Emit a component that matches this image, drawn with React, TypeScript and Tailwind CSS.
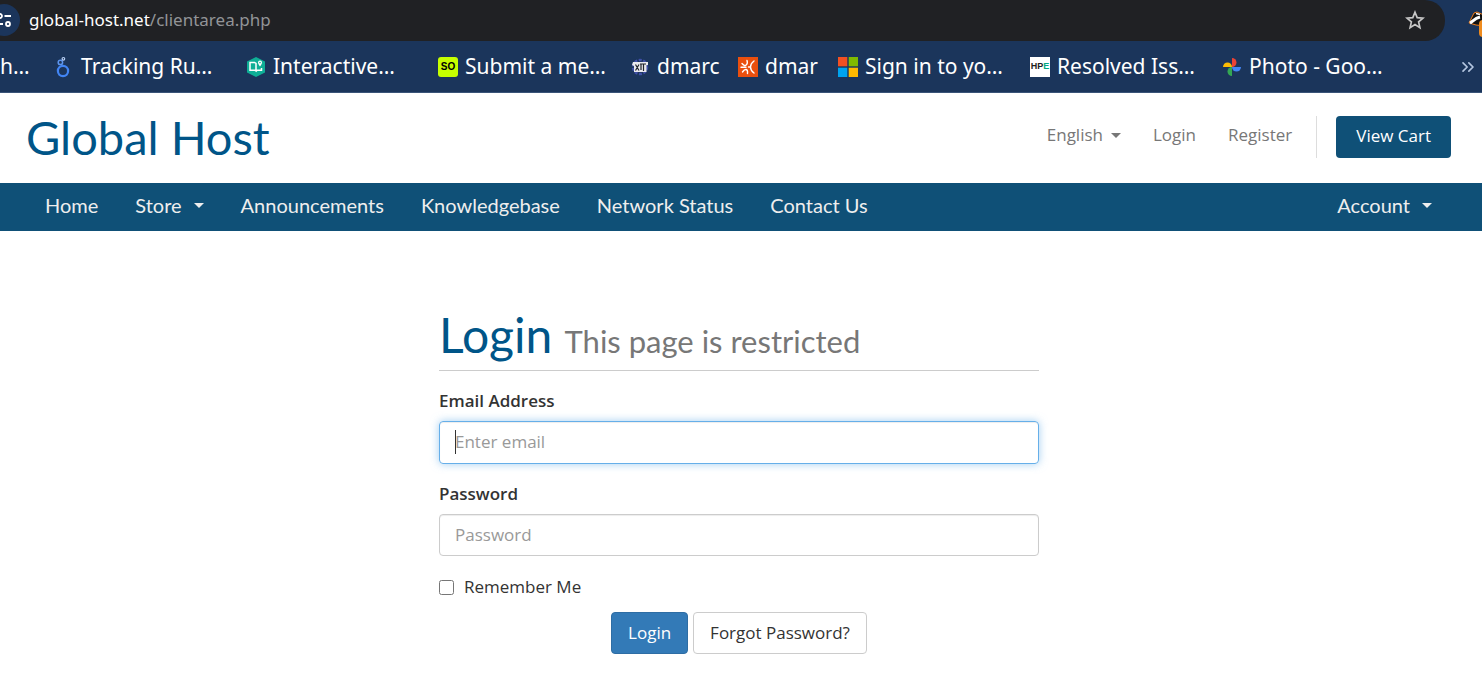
import type { ReactNode } from "react";
import { ChevronsRight } from "lucide-react";

const TunedIcon = () => (
  <svg width="16" height="16" viewBox="0 0 16 16" fill="none" stroke="#fff" strokeWidth="1.8">
    <circle cx="4" cy="4" r="2" />
    <path d="M8.5 4H15M0 12h7" />
    <circle cx="12" cy="12" r="2" />
  </svg>
);

const StarIcon = () => (
  <svg width="20" height="20" viewBox="0 0 20 20" fill="none" stroke="#c7c7c7" strokeWidth="1.7">
    <path d="M10 2.200l2.200 5.400 5.800.5-4.400 3.800 1.300 5.700-4.900-3-4.900 3 1.300-5.700L2 8.100l5.800-.5z" />
  </svg>
);

const LookerIcon = () => (
  <svg width="20" height="22" viewBox="0 0 20 22" fill="none">
    <circle cx="9" cy="15" r="5.1" stroke="#4285f4" strokeWidth="2.2" />
    <circle cx="6.4" cy="6.4" r="2.2" stroke="#5d95ee" strokeWidth="1.5" />
    <circle cx="9.4" cy="2.8" r="1.3" stroke="#b9d0f5" strokeWidth="1.2" />
  </svg>
);

const MapIcon = () => (
  <svg width="20" height="22" viewBox="0 0 20 22">
    <path d="M10 1l9 4.500v11L10 21l-9-4.500v-11z" fill="#0fae96" />
    <path d="M4 6.500h4.500L10 7.500V15l-1.500-.8H4zM10 15l1.500-.8h4V12" fill="none" stroke="#fff" strokeWidth="1.500" />
    <path d="M14 4.500a2 2 0 0 1 2 2c0 1.500-2 4-2 4s-2-2.500-2-4a2 2 0 0 1 2-2z" fill="#fff" />
    <circle cx="14" cy="6.600" r=".8" fill="#0fae96" />
  </svg>
);

const SoIcon = () => (
  <span className="flex size-5 items-center justify-center rounded-[3px] bg-[#c6ff00] font-['Liberation_Sans',sans-serif] text-[10px] leading-none font-bold text-black">
    SO
  </span>
);

const ToolboxIcon = () => (
  <svg width="20" height="20" viewBox="0 0 20 20">
    <circle cx="10" cy="10" r="7" fill="none" stroke="#3f4fa6" strokeWidth="2.500" strokeDasharray="3 1.500" />
    <path d="M3 5h15v3h-1.500v7H4V9L2 8z" fill="#e9e9ee" />
    <path d="M5.500 7.500l3.500 6M9 7.500l-3.500 6M10 7h6M13.500 7v7M11 7v6" stroke="#20242c" strokeWidth="1.200" />
  </svg>
);

const NodesIcon = () => (
  <svg width="20" height="20" viewBox="0 0 20 20">
    <path d="M0 0h20v20H0z" fill="#ea4f0e" />
    <path
      d="M9 3.500q1 3-.8 4.500T4 6.500M3 10.300h5M4.500 15q2-3 3.700-2.500T9.500 16.500M16 4q-3.500 2.500-3.500 6t3.500 6M12.500 10h-2"
      fill="none"
      stroke="#fff"
      strokeWidth="1.400"
      strokeLinecap="round"
    />
  </svg>
);

const MicrosoftIcon = () => (
  <svg width="20" height="20" viewBox="0 0 20 20">
    <path d="M0 0h9.300v9.300H0z" fill="#f25022" />
    <path d="M10.700 0H20v9.300h-9.300z" fill="#7fba00" />
    <path d="M0 10.700h9.300V20H0z" fill="#00a4ef" />
    <path d="M10.700 10.700H20V20h-9.300z" fill="#ffb900" />
  </svg>
);

const HpeIcon = () => (
  <span className="flex size-5 items-center justify-center overflow-hidden bg-white font-['Liberation_Sans',sans-serif] text-[9px] leading-none font-bold text-[#222]">
    HP<span className="text-[#01a982]">E</span>
  </span>
);

const PhotosIcon = () => (
  <svg width="20" height="20" viewBox="0 0 20 20">
    <path d="M10 1a4.500 4.500 0 0 1 0 9z" fill="#ea4335" />
    <path d="M19 10a4.500 4.500 0 0 1-9 0z" fill="#4285f4" />
    <path d="M10 19a4.500 4.500 0 0 1 0-9z" fill="#34a853" />
    <path d="M1 10a4.500 4.500 0 0 1 9 0z" fill="#fbbc04" />
  </svg>
);

const BadgerIcon = () => (
  <svg className="shrink-0" width="24" height="28" viewBox="0 0 24 28">
    <path d="M1 13L6 3l3-1 9 4v10l-10-1z" fill="#111" stroke="#ef7d1a" />
    <path d="M2 13c2-1 5-5 10-6" stroke="#fff" strokeWidth="3" fill="none" />
    <path d="M8 3.500l4 1" stroke="#fff" strokeWidth="1.500" />
    <rect x="11" y="10" width="16" height="17" rx="4" fill="#ef8b1e" />
  </svg>
);

const Caret = () => (
  <span aria-hidden="true" className="inline-block border-x-5 border-t-5 border-x-transparent border-t-current align-middle" />
);

type Bookmark = { label: string; icon: ReactNode; width: string };

const bookmarks: Bookmark[] = [
  { label: "Tracking Ru…", icon: <LookerIcon />, width: "w-48" },
  { label: "Interactive…", icon: <MapIcon />, width: "w-48" },
  { label: "Submit a me…", icon: <SoIcon />, width: "w-48" },
  { label: "dmarc", icon: <ToolboxIcon />, width: "w-27" },
  { label: "dmar", icon: <NodesIcon />, width: "w-25" },
  { label: "Sign in to yo…", icon: <MicrosoftIcon />, width: "w-48" },
  { label: "Resolved Iss…", icon: <HpeIcon />, width: "w-48" },
  { label: "Photo - Goo…", icon: <PhotosIcon />, width: "w-48" },
];

const navItems = [
  { label: "Home" },
  { label: "Store", menu: true },
  { label: "Announcements" },
  { label: "Knowledgebase" },
  { label: "Network Status" },
  { label: "Contact Us" },
];

function BrowserBar() {
  return (
    <div className="bg-[#1b355b] font-['Noto_Sans',sans-serif] text-white">
      <div className="flex h-[41px] items-start justify-between overflow-hidden">
        <div className="flex h-[41px] flex-1 items-center rounded-r-[20px] bg-[#202124] pr-5 pb-0.5">
          <button aria-label="Site information" className="-ml-3 flex size-8 items-center justify-center rounded-full bg-[#1b355b]">
            <TunedIcon />
          </button>
          <p className="ml-[9px] flex-1 text-[17px] leading-6">
            global-host.net<span className="text-[#929497]">/clientarea.php</span>
          </p>
          <button aria-label="Bookmark this page">
            <StarIcon />
          </button>
        </div>
        <button aria-label="Privacy extension" className="flex w-[37px] justify-start overflow-hidden pt-2.5 pl-[23px]">
          <BadgerIcon />
        </button>
      </div>
      <div className="flex h-[52px] items-center overflow-hidden border-b border-[#3a5478] text-[21px]">
        <a href="#" className="w-[54px] shrink-0 whitespace-nowrap">h…</a>
        {bookmarks.map((b) => (
          <a key={b.label} href="#" className={`flex shrink-0 items-center gap-[7px] whitespace-nowrap ${b.width}`}>
            <span className="flex w-5 justify-center">{b.icon}</span>
            {b.label}
          </a>
        ))}
        <button aria-label="More bookmarks" className="ml-auto pr-1">
          <ChevronsRight size={20} color="#b4c6e0" />
        </button>
      </div>
    </div>
  );
}

function SiteHeader() {
  return (
    <header>
      <div className="flex h-[90px] items-center justify-between pr-[31px] pb-0.5 pl-[26px]">
        <a href="#" className="font-[Lato,sans-serif] text-[47px] leading-[54px] text-[#058]">Global Host</a>
        <div className="flex items-start text-[17px] leading-6 text-[#777]">
          <div className="flex gap-8 pt-[7px] pr-6">
            <button className="flex items-center gap-2">
              English <Caret />
            </button>
            <a href="#">Login</a>
            <a href="#">Register</a>
          </div>
          <div className="border-l border-[#ddd] pl-[19px]">
            <a href="#" className="block rounded-[4px] bg-[#0f5077] px-5 pt-2 pb-2.5 text-white">View Cart</a>
          </div>
        </div>
      </div>
      <nav className="flex h-12 items-center justify-between bg-[#0f5077] pr-[50px] pb-1 pl-[45px] font-[Lato,sans-serif] text-xl leading-6 text-[#eee]">
        <div className="flex gap-[37px]">
          {navItems.map((item) => (
            <a key={item.label} href="#" className="flex items-center gap-3">
              {item.label}
              {item.menu && <Caret />}
            </a>
          ))}
        </div>
        <a href="#" className="flex items-center gap-3">
          Account <Caret />
        </a>
      </nav>
    </header>
  );
}

function LoginForm() {
  return (
    <main className="pt-[75px] pr-1 pb-6">
      <form className="mx-auto w-full max-w-[600px] text-[17px] leading-6" onSubmit={(e) => e.preventDefault()}>
        <h1 className="border-b border-[#ccc] font-[Lato,sans-serif] text-[48px] leading-[57px] text-[#058]">
          Login <small className="text-[31px] text-[#777]">This page is restricted</small>
        </h1>
        <label htmlFor="email" className="mt-[18px] block font-semibold">Email Address</label>
        <div className="relative mt-2">
          <input
            id="email"
            type="email"
            placeholder="Enter email"
            className="block h-[43px] w-full rounded-[4px] border border-[#66afe9] px-[15px] pb-0.5 caret-transparent shadow-[inset_0_1px_1px_rgba(0,0,0,0.075),0_0_8px_rgba(102,175,233,0.6)] outline-none placeholder:text-[#999]"
          />
          <span aria-hidden="true" className="absolute top-[9px] left-4 h-6 w-px bg-[#333]" />
        </div>
        <label htmlFor="password" className="mt-[18px] block font-semibold">Password</label>
        <input
          id="password"
          type="password"
          placeholder="Password"
          className="mt-2 block h-[42px] w-full rounded-[4px] border border-[#ccc] px-[15px] pb-0.5 shadow-[inset_0_1px_1px_rgba(0,0,0,0.075)] outline-none placeholder:text-[#999]"
        />
        <label className="mt-[19px] flex w-fit items-center gap-2.5">
          <input type="checkbox" className="size-[15px]" />
          Remember Me
        </label>
        <div className="mt-[13px] flex justify-center gap-[5px]">
          <button type="submit" className="h-[42px] rounded-[4px] border border-[#2e6da4] bg-[#337ab7] px-4 text-white">Login</button>
          <a href="#" className="flex h-[42px] items-center rounded-[4px] border border-[#ccc] px-4">Forgot Password?</a>
        </div>
      </form>
    </main>
  );
}

export default function App() {
  return (
    <div className="min-h-screen bg-white font-['Open_Sans',sans-serif] text-[#333]">
      <BrowserBar />
      <SiteHeader />
      <LoginForm />
    </div>
  );
}
